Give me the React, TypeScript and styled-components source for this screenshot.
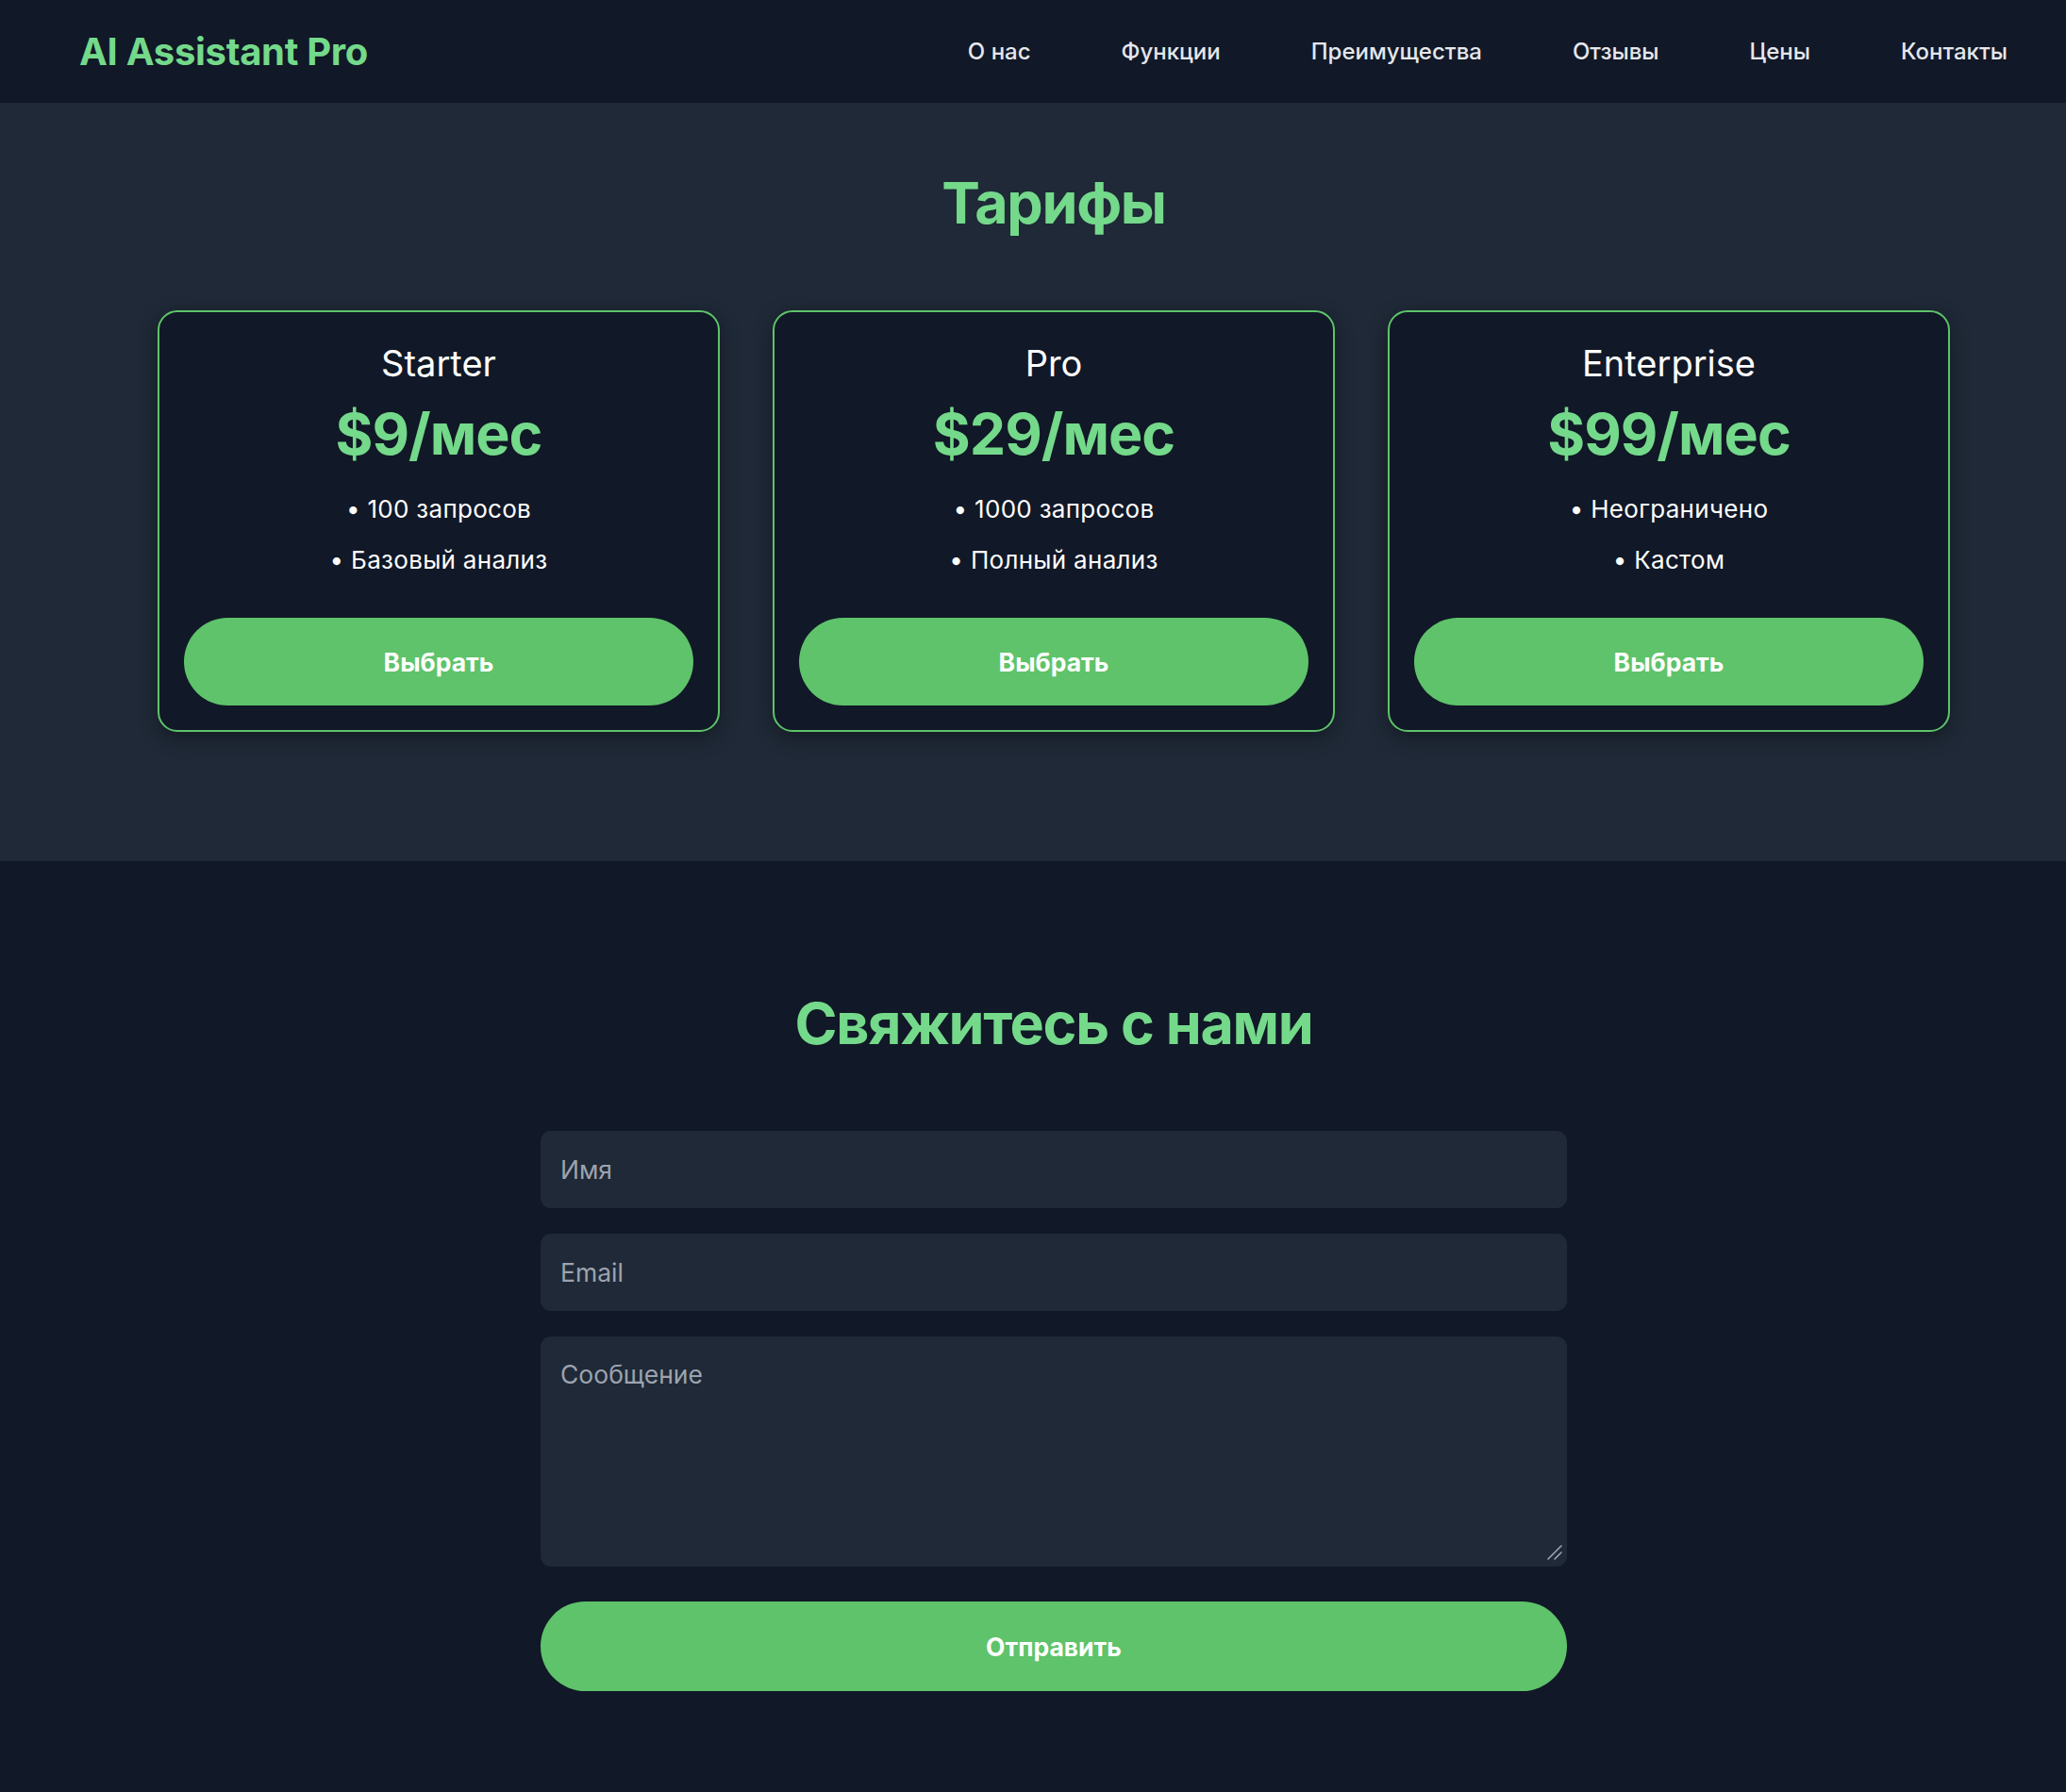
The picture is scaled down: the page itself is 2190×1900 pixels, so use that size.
import styled, { createGlobalStyle } from "styled-components";

const green = "#74d98a";
const buttonGreen = "#5ec36a";
const dark = "#111827";
const panel = "#1f2937";

const GlobalStyle = createGlobalStyle`
  html, body {
    margin: 0;
    padding: 0;
    background: ${dark};
    overflow-x: hidden;
  }
  * {
    box-sizing: border-box;
  }
`;

const Page = styled.div`
  width: 2234px;
  min-height: 100vh;
  background: ${dark};
  color: #fff;
  font-family: Inter, "Noto Sans", sans-serif;
`;

const Nav = styled.nav`
  height: 109px;
  padding: 0 84px;
  display: flex;
  align-items: center;
  justify-content: space-between;
  background: ${dark};
`;

const Logo = styled.div`
  font-size: 40px;
  font-weight: 700;
  color: ${green};
  letter-spacing: -0.3px;
`;

const Links = styled.ul`
  display: flex;
  gap: 52px;
  list-style: none;
  margin: 0;
  padding: 0;
`;

const Link = styled.a`
  padding: 0 22px;
  font-size: 24px;
  font-weight: 500;
  color: #e5e7eb;
  text-decoration: none;
`;

const Section = styled.section<{ $bg: string; $top: number; $bottom: number }>`
  background: ${(p) => p.$bg};
  padding: ${(p) => p.$top}px 0 ${(p) => p.$bottom}px;
`;

const Title = styled.h2`
  margin: 0 0 76px;
  font-size: 61px;
  line-height: 75px;
  font-weight: 700;
  letter-spacing: -1.3px;
  text-align: center;
  color: ${green};
`;

const Plans = styled.div`
  display: grid;
  grid-template-columns: repeat(3, 596px);
  gap: 56px;
  justify-content: center;
`;

const Card = styled.div`
  background: ${dark};
  border: 2px solid ${buttonGreen};
  border-radius: 21px;
  padding: 26px;
  text-align: center;
  box-shadow: 0 6px 20px rgba(0, 0, 0, 0.35);
`;

const PlanName = styled.h3`
  margin: 5px 0 15px;
  font-size: 38px;
  line-height: 46px;
  font-weight: 400;
`;

const Price = styled.div`
  margin-bottom: 16px;
  font-size: 61px;
  line-height: 74px;
  font-weight: 700;
  letter-spacing: -1px;
  color: ${green};
`;

const Features = styled.ul`
  list-style: none;
  margin: 0;
  padding: 0;
`;

const Feature = styled.li`
  font-size: 26px;
  line-height: 54px;
  letter-spacing: 0.3px;
`;

const PillButton = styled.button<{ $height: number; $top: number }>`
  width: 100%;
  height: ${(p) => p.$height}px;
  margin-top: ${(p) => p.$top}px;
  border: none;
  border-radius: 999px;
  background: ${buttonGreen};
  color: #fff;
  font-family: inherit;
  font-size: 26.5px;
  font-weight: 700;
  cursor: pointer;
`;

const Form = styled.form`
  width: 1088px;
  margin: 0 auto;
  display: flex;
  flex-direction: column;
  gap: 27px;
`;

const fieldStyle = `
  width: 100%;
  border: none;
  outline: none;
  border-radius: 11px;
  background: ${panel};
  color: #fff;
  font-family: Inter, "Noto Sans", sans-serif;
  font-size: 26.5px;
  padding: 0 21px;
  &::placeholder {
    color: #9ca3af;
  }
`;

const Input = styled.input`
  ${fieldStyle}
  height: 82px;
`;

const MessageBox = styled.div`
  position: relative;
`;

const Message = styled.textarea`
  ${fieldStyle}
  height: 244px;
  padding: 21px;
  line-height: 39px;
  resize: none;
  display: block;
`;

const Grip = styled.svg`
  position: absolute;
  right: 5px;
  bottom: 7px;
  width: 16px;
  height: 16px;
  pointer-events: none;
`;

const plans = [
  { name: "Starter", price: "$9/мес", features: ["100 запросов", "Базовый анализ"] },
  { name: "Pro", price: "$29/мес", features: ["1000 запросов", "Полный анализ"] },
  { name: "Enterprise", price: "$99/мес", features: ["Неограничено", "Кастом"] },
];

const navItems = ["О нас", "Функции", "Преимущества", "Отзывы", "Цены", "Контакты"];

export default function App() {
  return (
    <Page>
      <GlobalStyle />
      <Nav>
        <Logo>AI Assistant Pro</Logo>
        <Links>
          {navItems.map((item) => (
            <li key={item}>
              <Link href="#">{item}</Link>
            </li>
          ))}
        </Links>
      </Nav>

      <Section $bg={panel} $top={69} $bottom={137}>
        <Title>Тарифы</Title>
        <Plans>
          {plans.map((plan) => (
            <Card key={plan.name}>
              <PlanName>{plan.name}</PlanName>
              <Price>{plan.price}</Price>
              <Features>
                {plan.features.map((f) => (
                  <Feature key={f}>• {f}</Feature>
                ))}
              </Features>
              <PillButton type="button" $height={93} $top={34}>
                Выбрать
              </PillButton>
            </Card>
          ))}
        </Plans>
      </Section>

      <Section $bg={dark} $top={135} $bottom={134}>
        <Title>Свяжитесь с нами</Title>
        <Form onSubmit={(e) => e.preventDefault()}>
          <Input placeholder="Имя" />
          <Input placeholder="Email" />
          <MessageBox>
            <Message placeholder="Сообщение" />
            <Grip viewBox="0 0 16 16">
              <path d="M1 15 L15 1 M8 15 L15 8" stroke="#9ca3af" strokeWidth="1.6" strokeLinecap="round" />
            </Grip>
          </MessageBox>
          <PillButton type="submit" $height={95} $top={10}>
            Отправить
          </PillButton>
        </Form>
      </Section>
    </Page>
  );
}
